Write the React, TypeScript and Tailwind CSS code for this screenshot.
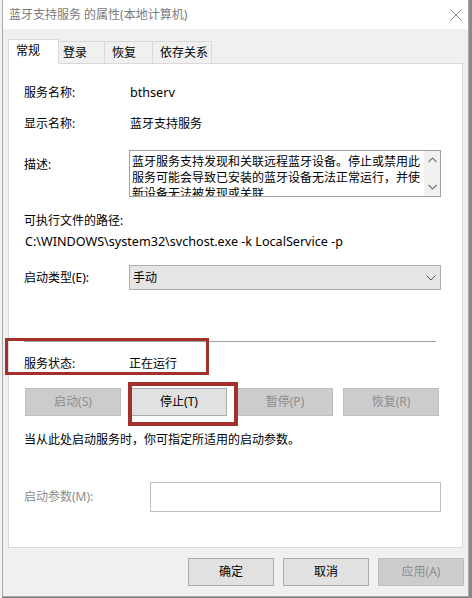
import React from "react";

const F = { fontFamily: '"Noto Sans", "Noto Sans CJK SC", sans-serif' } as React.CSSProperties;

function Btn({ label, disabled, w }: { label: string; disabled?: boolean; w: string }) {
  return (
    <div
      className={
        "h-[28px] flex items-center justify-center border text-[12px] " +
        w +
        (disabled
          ? " bg-[#cccccc] border-[#bfbfbf] text-[#8c8c8c]"
          : " bg-[#e1e1e1] border-[#adadad] text-black")
      }
    >
      {label}
    </div>
  );
}

export default function App() {
  return (
    <div className="w-[472px] h-[598px] relative flex bg-[#7d7d7d] overflow-hidden" style={F}>
      <div className="w-[2px] h-full bg-[#f2f2f2]" />
      <div className="w-[467px] h-[597px] flex flex-col bg-[#f0f0f0] border-l border-r border-b border-[#a8a8a8]">
        {/* title bar */}
        <div className="h-[29px] bg-white flex items-center justify-between pl-[6px] pr-[6px] shrink-0">
          <span className="text-[12px] text-[#7a7a7a] leading-[16px]">蓝牙支持服务 的属性(本地计算机)</span>
          <svg width="12" height="12" viewBox="0 0 12 12">
            <path d="M0.5 0.5 L11.5 11.5 M11.5 0.5 L0.5 11.5" stroke="#8a8a8a" strokeWidth="1" />
          </svg>
        </div>
        {/* tabs */}
        <div className="flex items-end ml-[5px] mt-[10px] h-[24px] relative z-10 text-[12px]">
          <div className="h-[25px] w-[51px] -mb-px bg-white border border-b-0 border-[#d9d9d9] flex items-center pl-[7px] pb-[2px]">
            常规
          </div>
          <div className="h-[22px] w-[47px] -ml-px bg-[#f0f0f0] border border-b-0 border-[#d9d9d9] flex items-center pl-[4px]">
            登录
          </div>
          <div className="h-[22px] w-[49px] -ml-px bg-[#f0f0f0] border border-b-0 border-[#d9d9d9] flex items-center pl-[7px]">
            恢复
          </div>
          <div className="h-[22px] w-[60px] -ml-px bg-[#f0f0f0] border border-b-0 border-[#d9d9d9] flex items-center pl-[7px]">
            依存关系
          </div>
        </div>
        {/* panel */}
        <div className="ml-[5px] w-[455px] h-[485px] bg-white border border-[#d9d9d9] pl-[15px] pr-[21px] flex flex-col text-[12px] leading-[16px] text-black">
          <div className="mt-[17px] h-[24px] flex items-center">
            <span className="w-[106px]">服务名称:</span>
            <span className="text-[12.6px]">bthserv</span>
          </div>
          <div className="mt-[7px] h-[24px] flex items-center">
            <span className="w-[106px]">显示名称:</span>
            <span>蓝牙支持服务</span>
          </div>
          <div className="mt-[14px] flex items-start">
            <span className="w-[105px] mt-[7px]">描述:</span>
            <div className="w-[312px] h-[47px] border border-[#a0a0a0] flex overflow-hidden">
              <div className="flex-1 pl-[2px] pt-[3px] overflow-hidden leading-[16px]">
                <div className="whitespace-nowrap">蓝牙服务支持发现和关联远程蓝牙设备。停止或禁用此</div>
                <div className="whitespace-nowrap">服务可能会导致已安装的蓝牙设备无法正常运行，并使</div>
                <div className="whitespace-nowrap">新设备无法被发现或关联</div>
              </div>
              <div className="w-[16px] bg-[#f0f0f0] flex flex-col justify-between items-center py-[6px]">
                <svg width="9" height="6" viewBox="0 0 9 6">
                  <path d="M0.5 5 L4.5 1 L8.5 5" stroke="#7a7a7a" fill="none" strokeWidth="1.2" />
                </svg>
                <svg width="9" height="6" viewBox="0 0 9 6">
                  <path d="M0.5 1 L4.5 5 L8.5 1" stroke="#7a7a7a" fill="none" strokeWidth="1.2" />
                </svg>
              </div>
            </div>
          </div>
          <div className="mt-[16px]">可执行文件的路径:</div>
          <div className="mt-[5px] pl-[1px] text-[12.6px]">C:\WINDOWS\system32\svchost.exe -k LocalService -p</div>
          <div className="mt-[15px] flex items-center">
            <span className="w-[105px]">启动类型(E):</span>
            <div className="w-[312px] h-[25px] bg-[#e5e5e5] border border-[#adadad] flex items-center justify-between pl-[3px] pr-[4px]">
              <span>手动</span>
              <svg width="10" height="6" viewBox="0 0 10 6">
                <path d="M0.5 0.5 L5 5 L9.5 0.5" stroke="#555" fill="none" strokeWidth="1" />
              </svg>
            </div>
          </div>
          <div className="mt-[51px] w-[412px] h-px bg-[#a0a0a0]" />
          <div className="mt-[14px] flex items-center">
            <span className="w-[105px]">服务状态:</span>
            <span>正在运行</span>
          </div>
          <div className="mt-[16px] ml-[1px] flex gap-[10px]">
            <Btn label="启动(S)" disabled w="w-[96px]" />
            <Btn label="停止(T)" w="w-[96px]" />
            <Btn label="暂停(P)" disabled w="w-[96px]" />
            <Btn label="恢复(R)" disabled w="w-[96px]" />
          </div>
          <div className="mt-[16px]">当从此处启动服务时，你可指定所适用的启动参数。</div>
          <div className="mt-[34px] flex items-center">
            <span className="w-[126px] text-[#8c8c8c]">启动参数(M):</span>
            <div className="w-[291px] h-[30px] border border-[#bfbfbf] bg-white" />
          </div>
        </div>
        {/* bottom buttons */}
        <div className="mt-[10px] flex justify-end gap-[9px] pr-[4px]">
          <Btn label="确定" w="w-[86px]" />
          <Btn label="取消" w="w-[86px]" />
          <Btn label="应用(A)" disabled w="w-[86px]" />
        </div>
      </div>
      <div className="flex-1 h-full bg-[#8a8a8a]" />
      {/* annotation boxes */}
      <div className="absolute left-[5px] top-[338px] w-[204px] h-[37px] border-[3px] border-[#a3302b] pointer-events-none" />
      <div className="absolute left-[128px] top-[382px] w-[110px] h-[44px] border-[4px] border-[#a3302b] pointer-events-none" />
    </div>
  );
}
